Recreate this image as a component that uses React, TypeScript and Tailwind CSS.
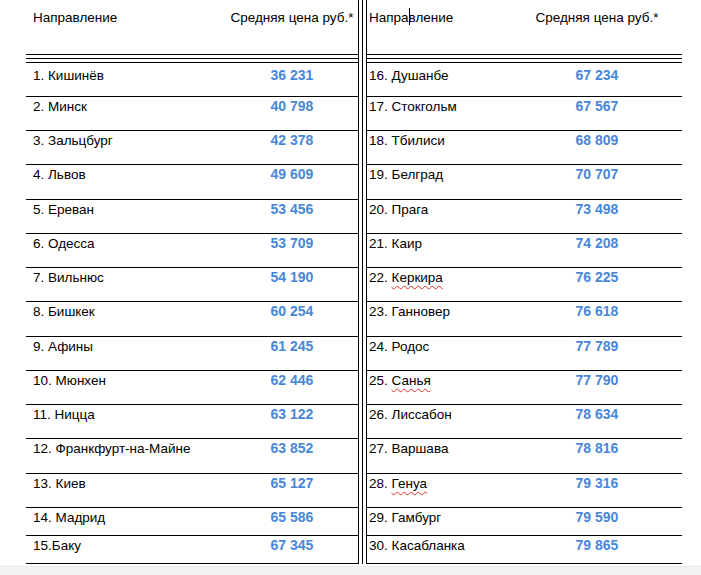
import React from "react";

type Row = { name: React.ReactNode; price: string; h: string; pt: string };

const heights = [
  "h-[34px]", "h-[34px]", "h-[34px]", "h-[35px]", "h-[34px]",
  "h-[34px]", "h-[34px]", "h-[35px]", "h-[34px]", "h-[34px]",
  "h-[34px]", "h-[35px]", "h-[34px]", "h-[28px]", "h-[28px]",
];

const Wavy = ({ children }: { children: React.ReactNode }) => (
  <span className="underline decoration-wavy decoration-[#e0302a] decoration-1 underline-offset-[3px]">
    {children}
  </span>
);

const leftData: [React.ReactNode, string][] = [
  ["1. Кишинёв", "36 231"],
  ["2. Минск", "40 798"],
  ["3. Зальцбург", "42 378"],
  ["4. Львов", "49 609"],
  ["5. Ереван", "53 456"],
  ["6. Одесса", "53 709"],
  ["7. Вильнюс", "54 190"],
  ["8. Бишкек", "60 254"],
  ["9. Афины", "61 245"],
  ["10. Мюнхен", "62 446"],
  ["11. Ницца", "63 122"],
  ["12. Франкфурт-на-Майне", "63 852"],
  ["13. Киев", "65 127"],
  ["14. Мадрид", "65 586"],
  ["15.Баку", "67 345"],
];

const rightData: [React.ReactNode, string][] = [
  ["16. Душанбе", "67 234"],
  ["17. Стокгольм", "67 567"],
  ["18. Тбилиси", "68 809"],
  ["19. Белград", "70 707"],
  ["20. Прага", "73 498"],
  ["21. Каир", "74 208"],
  [<>22. <Wavy>Керкира</Wavy></>, "76 225"],
  ["23. Ганновер", "76 618"],
  ["24. Родос", "77 789"],
  [<>25. <Wavy>Санья</Wavy></>, "77 790"],
  ["26. Лиссабон", "78 634"],
  ["27. Варшава", "78 816"],
  [<>28. <Wavy>Генуа</Wavy></>, "79 316"],
  ["29. Гамбург", "79 590"],
  ["30. Касабланка", "79 865"],
];

function Table({
  data,
  header,
  wrap,
  padL,
  col2,
}: {
  data: [React.ReactNode, string][];
  header: React.ReactNode;
  wrap: string;
  padL: string;
  col2: string;
}) {
  return (
    <div className={`flex flex-col ${wrap}`}>
      <div className={`h-[55px] border-b border-black flex items-start pt-[10px] ${padL}`}>
        <div className="flex-1 leading-4">{header}</div>
        <div className={`${col2} text-center leading-4`}>Средняя цена руб.*</div>
      </div>
      <div className="h-[8px] pt-[3px]">
        <div className="h-[5px] border-y border-black" />
      </div>
      {data.map(([name, price], i) => (
        <div
          key={i}
          className={`${heights[i]} border-b border-black flex items-baseline ${i === 0 ? "pt-[4px]" : "pt-[1px]"} ${padL}`}
        >
          <div className="flex-1 leading-4">{name}</div>
          <div className={`${col2} text-center leading-4 font-bold text-[14px] text-[#4a86d8]`}>
            {price}
          </div>
        </div>
      ))}
    </div>
  );
}

export default function App() {
  return (
    <div className="w-[701px] h-[575px] bg-white flex flex-col text-black text-[13.5px] font-['Liberation_Sans',Arial,sans-serif]">
      <div className="flex pl-[26px] h-[564px]">
        <Table
          data={leftData}
          header="Направление"
          wrap="w-[333px] border-r border-black"
          padL="pl-[7px]"
          col2="w-[132px]"
        />
        <div className="w-[7px] flex justify-center">
          <div className="w-px h-full bg-black" />
        </div>
        <Table
          data={rightData}
          header={
            <>
              Напра
              <span className="relative">
                <span className="absolute left-0 top-[-2px] w-px h-[17px] bg-black" />
              </span>
              вление
            </>
          }
          wrap="w-[316px] border-l border-black"
          padL="pl-[2px]"
          col2="w-[170px]"
        />
      </div>
      <div className="mt-[2px] h-[9px] bg-[#f3f3f3] border-t border-[#e8e8e8]" />
    </div>
  );
}
